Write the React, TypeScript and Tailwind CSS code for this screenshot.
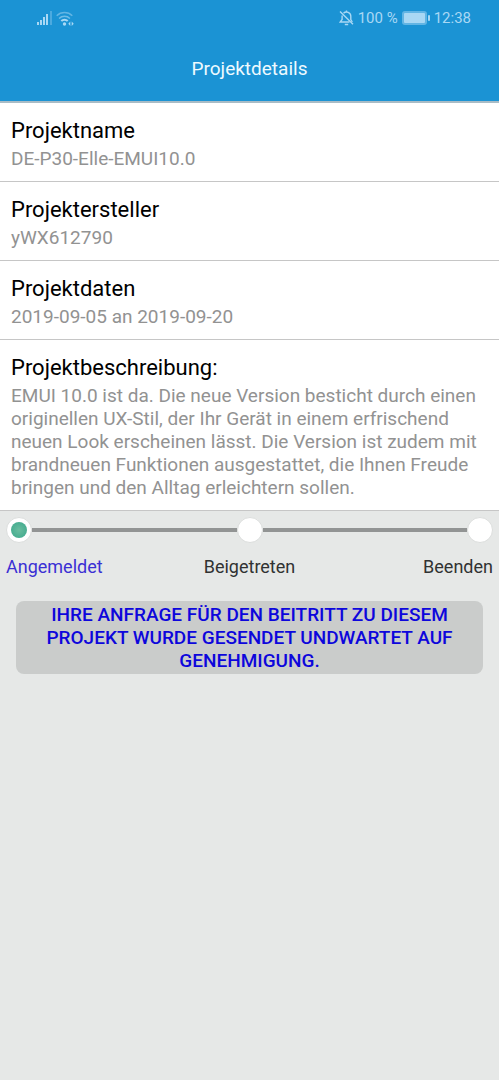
import React from 'react';

const details = [
  { label: 'Projektname', value: 'DE-P30-Elle-EMUI10.0' },
  { label: 'Projektersteller', value: 'yWX612790' },
  { label: 'Projektdaten', value: '2019-09-05 an 2019-09-20' },
  {
    label: 'Projektbeschreibung:',
    value:
      'EMUI 10.0 ist da. Die neue Version besticht durch einen originellen UX-Stil, der Ihr Gerät in einem erfrischend neuen Look erscheinen lässt. Die Version ist zudem mit brandneuen Funktionen ausgestattet, die Ihnen Freude bringen und den Alltag erleichtern sollen.',
  },
];

const steps = [
  { label: 'Angemeldet', active: true, align: 'text-left' },
  { label: 'Beigetreten', active: false, align: 'text-center' },
  { label: 'Beenden', active: false, align: 'text-right' },
];

const SignalIcon = () => (
  <svg width="16" height="14" viewBox="0 0 16 14" fill="#a9d8f4" aria-hidden="true">
    <rect x="1" y="11" width="2" height="3" />
    <rect x="4" y="9" width="2" height="5" />
    <rect x="7" y="6" width="2" height="8" />
    <rect x="10" y="3" width="2" height="11" />
    <rect x="14" y="0" width="2" height="14" opacity="0.35" />
  </svg>
);

const WifiIcon = () => (
  <svg width="18" height="15" viewBox="0 0 18 15" fill="none" stroke="#a9d8f4" strokeWidth="1.5" aria-hidden="true">
    <path d="M.7 4.8a11 11 0 0 1 15.6 0" opacity="0.5" />
    <path d="M3.1 7.5a7.6 7.6 0 0 1 10.8 0" opacity="0.6" />
    <path d="M5.3 10a4.5 4.5 0 0 1 6.4 0" strokeWidth="2" />
    <circle cx="8.5" cy="13" r="1.7" fill="#a9d8f4" stroke="none" />
    <path d="M12.3 12.8l2-2.2v4.4zM17.7 12.8l-2-2.2v4.4z" fill="#a9d8f4" stroke="none" />
  </svg>
);

const BellOffIcon = () => (
  <svg width="15" height="16" viewBox="0 0 15 16" fill="none" stroke="#a9d8f4" strokeWidth="1.4" aria-hidden="true">
    <path d="M4.5 3.3a4.3 4.3 0 0 1 7.3 3.1v3.1l1.5 2.5M10.5 12H1.2l1.9-2.6V5.5" />
    <path d="M7.5 2V.5M5.8 14.5h3.4M1 1.5l13 12.8" />
  </svg>
);

const BatteryIcon = () => (
  <svg width="28" height="14" viewBox="0 0 28 14" fill="#a9d8f4" aria-hidden="true">
    <rect x="0" y="0" width="25" height="14" rx="3" opacity="0.5" />
    <rect x="2" y="2" width="21" height="10" rx="1" />
    <rect x="26" y="4" width="2" height="6" rx="1" />
  </svg>
);

const StatusBar = () => (
  <div className="flex h-9 items-center justify-between pr-7 pl-9 text-[15px] text-[#a9d8f4]">
    <div className="flex items-center gap-1">
      <SignalIcon />
      <WifiIcon />
    </div>
    <div className="flex items-center gap-1">
      <BellOffIcon />
      <span>100 %</span>
      <BatteryIcon />
      <span>12:38</span>
    </div>
  </div>
);

const Progress = () => (
  <div className="px-[6px] pt-[6px]">
    <div className="flex items-center">
      {steps.map((step, index) => (
        <React.Fragment key={step.label}>
          {index > 0 && <div className="h-1 flex-1 bg-[#929494]" />}
          <div className="flex size-[26px] items-center justify-center rounded-full border border-[#dcdedd] bg-white">
            {step.active && (
              <div className="size-4 rounded-full bg-radial from-[#69bd9f] to-[#37a78b]" />
            )}
          </div>
        </React.Fragment>
      ))}
    </div>
    <ol className="mt-3 grid grid-cols-3 text-[18px] leading-6">
      {steps.map((step) => (
        <li
          key={step.label}
          aria-current={step.active ? 'step' : undefined}
          className={`${step.align} ${step.active ? 'text-[#3b30d4]' : 'text-[#303232]'}`}
        >
          {step.label}
        </li>
      ))}
    </ol>
  </div>
);

const App: React.FC = () => {
  return (
    <div className="min-h-screen bg-[#e6e8e7] font-['Roboto',sans-serif]">
      <header className="border-b-2 border-[#a9bcc6] bg-[#1b93d4]">
        <StatusBar />
        <h1 className="pt-[18px] pb-[17px] text-center text-[19px] leading-[30px] text-[#eefaff]">
          Projektdetails
        </h1>
      </header>

      <main>
        <dl>
          {details.map((item) => (
            <div key={item.label} className="border-b border-[#c6c6c6] bg-white px-[11px] pt-3 pb-[11px]">
              <dt className="text-[22px] leading-8 text-black">{item.label}</dt>
              <dd className="text-[19px] leading-[23px] text-[#929292]">{item.value}</dd>
            </div>
          ))}
        </dl>

        <Progress />

        <div className="px-4 pt-[22px]">
          <button
            type="button"
            className="w-full rounded-lg bg-[#cacccb] px-5 py-[2px] text-center text-[19px] leading-[23px] font-medium text-[#0d06dc] uppercase"
          >
            Ihre Anfrage für den Beitritt zu diesem Projekt wurde gesendet undwartet auf Genehmigung.
          </button>
        </div>
      </main>
    </div>
  );
};

export default App;
